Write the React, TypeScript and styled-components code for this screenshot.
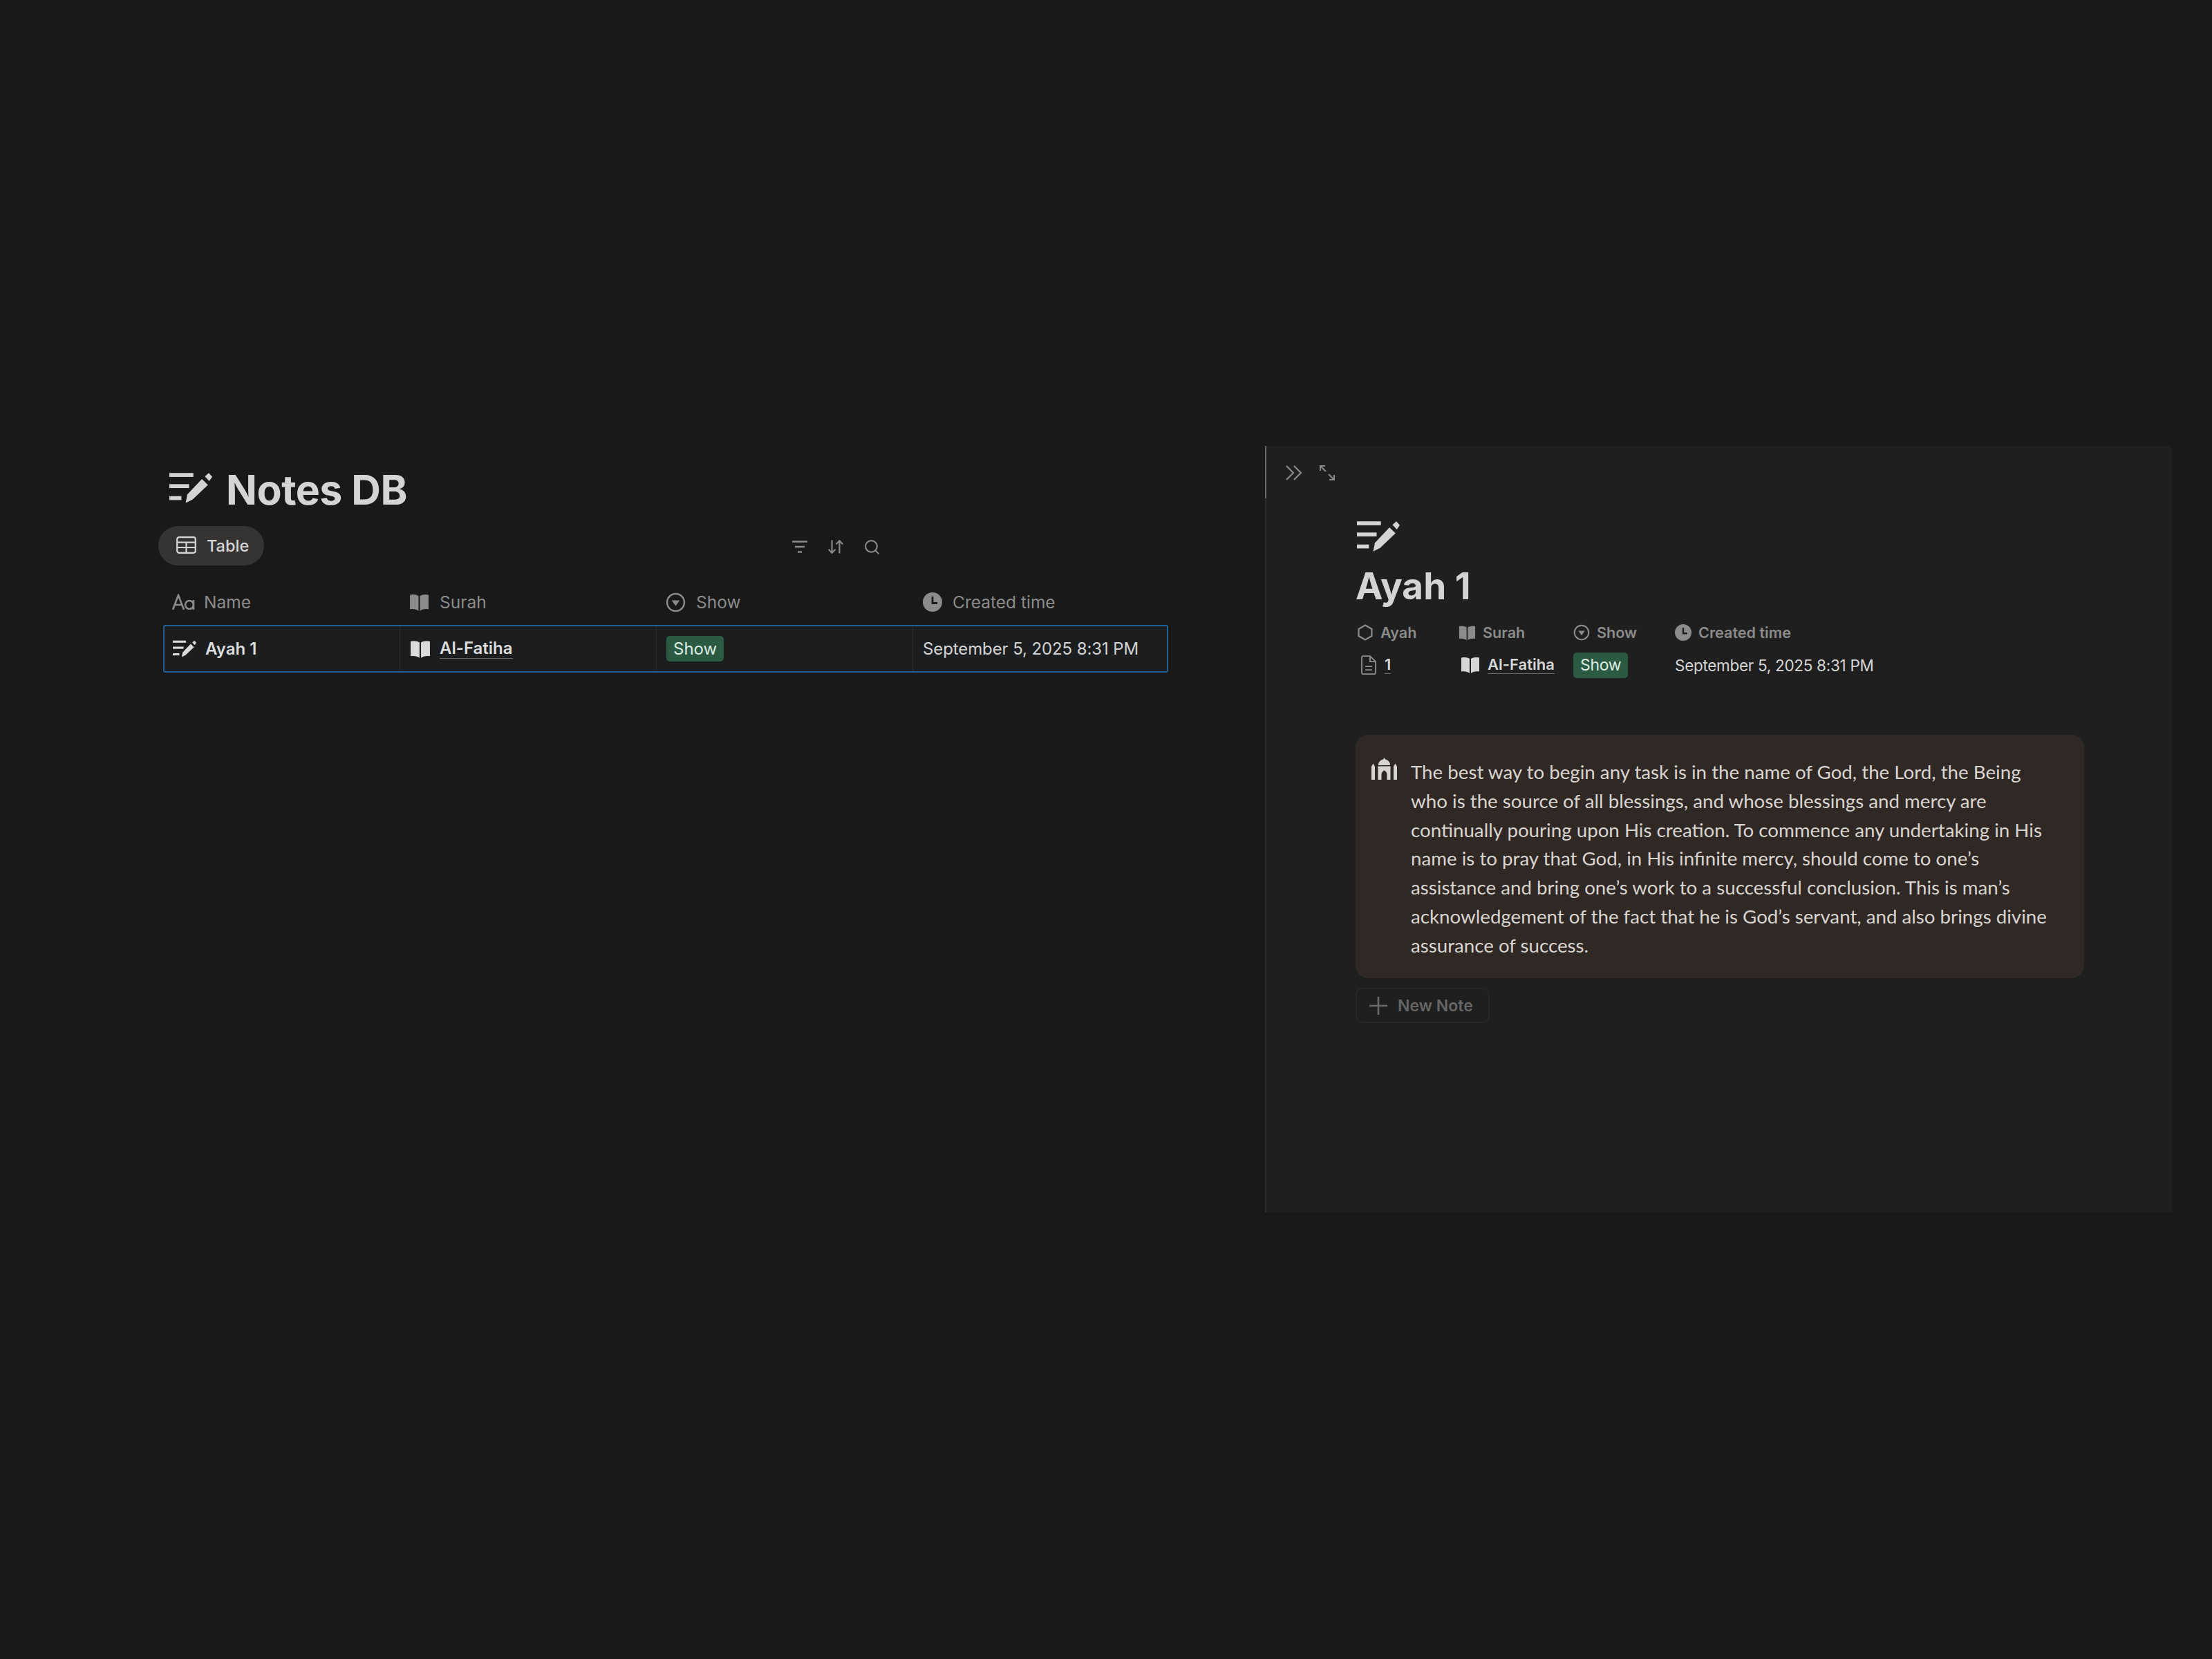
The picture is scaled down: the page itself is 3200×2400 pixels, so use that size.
import React from 'react';
import styled, { createGlobalStyle } from 'styled-components';
import { ArrowDownUp, Search } from 'lucide-react';

const GlobalStyle = createGlobalStyle`
  html, body {
    margin: 0;
    padding: 0;
    background: #191919;
  }
  body {
    font-family: 'Inter', 'Liberation Sans', sans-serif;
    -webkit-font-smoothing: antialiased;
  }
`;

const Page = styled.div`
  width: 3200px;
  height: 2400px;
  box-sizing: border-box;
  padding: 645px 58px 0 229px;
  display: flex;
  align-items: flex-start;
  justify-content: space-between;
  background: #191919;
`;

const Database = styled.section`
  width: 1461px;
  padding-top: 34px;
`;

const DbTitle = styled.h1`
  display: flex;
  align-items: center;
  gap: 20px;
  margin: 0 0 24px 16px;
  height: 58px;
  font-size: 59px;
  font-weight: 700;
  color: #d4d4d4;
  letter-spacing: -0.5px;
  svg {
    margin-top: -6px;
  }
`;

const Toolbar = styled.div`
  display: flex;
  align-items: center;
  height: 57px;
  margin-bottom: 22px;
`;

const ViewPill = styled.div`
  display: flex;
  align-items: center;
  gap: 15px;
  width: 153px;
  height: 57px;
  box-sizing: border-box;
  padding-left: 26px;
  border-radius: 29px;
  background: #353433;
  color: #d6d6d6;
  font-size: 23.5px;
  font-weight: 500;
  svg {
    margin-top: -3px;
  }
`;

const ToolIcons = styled.div`
  display: flex;
  align-items: center;
  gap: 27px;
  margin: 3px 0 0 763px;
  color: #8a8a8a;
`;

const Table = styled.div`
  margin-left: 7px;
  width: 1454px;
`;

const TableRow = styled.div<{ $selected?: boolean }>`
  display: grid;
  grid-template-columns: 340px 371px 371px 372px;
  height: ${p => (p.$selected ? '69px' : '62px')};
  box-sizing: border-box;
  ${p => p.$selected && `
    margin-top: 2px;
    border: 2px solid #1f5f96;
    border-radius: 3px;
    background: #1b1d1f;
  `}
`;

const HeadCell = styled.div<{ $gap?: number; $pad?: number }>`
  display: flex;
  align-items: center;
  gap: ${p => p.$gap ?? 15}px;
  padding-left: ${p => p.$pad ?? 16}px;
  color: #8b8b8b;
  font-size: 24.5px;
`;

const Cell = styled.div`
  display: flex;
  align-items: center;
  gap: 13px;
  padding-left: 12px;
  color: #dcdcdc;
  font-size: 24px;
  font-weight: 600;
  & + & {
    border-left: 1px solid #2a2b2d;
    padding-left: 14px;
  }
`;

const LinkText = styled.span`
  border-bottom: 1px solid #6a6a6a;
  line-height: 1.15;
`;

const Tag = styled.span<{ $size?: number }>`
  display: inline-flex;
  align-items: center;
  justify-content: center;
  height: 37px;
  padding: 0 10px;
  border-radius: 5px;
  background: #2b5a43;
  color: #dcece2;
  font-size: ${p => p.$size ?? 24}px;
  font-weight: 400;
`;

const DateText = styled.span`
  font-weight: 400;
  color: #d4d4d4;
  letter-spacing: -0.1px;
`;

const Peek = styled.aside`
  position: relative;
  width: 1312px;
  height: 1109px;
  box-sizing: border-box;
  padding: 24px 0 0 28px;
  background: #1f1f1f;
  border-left: 2px solid #2f2f2f;
`;

const PeekAccent = styled.div`
  position: absolute;
  left: -2px;
  top: 0;
  width: 2px;
  height: 76px;
  background: #6b6b6b;
`;

const PeekControls = styled.div`
  display: flex;
  align-items: center;
  gap: 24px;
  height: 30px;
  color: #8a8a8a;
`;

const PeekBody = styled.div`
  margin-left: 101px;
  width: 1056px;
`;

const PageIcon = styled.div`
  margin: 54px 0 0 2px;
  height: 44px;
  color: #d4d4d4;
`;

const PageTitle = styled.h2`
  margin: 15px 0 0;
  height: 72px;
  line-height: 72px;
  font-size: 53px;
  font-weight: 700;
  color: #d4d4d4;
`;

const PropGrid = styled.div`
  display: grid;
  grid-template-columns: 147px 166px 147px auto;
  justify-content: start;
  margin: 13px 0 0 2px;
`;

const PropHead = styled.div`
  display: flex;
  align-items: center;
  gap: 10px;
  height: 36px;
  color: #8b8b8b;
  font-size: 21.6px;
  font-weight: 600;
`;

const PropValue = styled.div<{ $pad?: number }>`
  display: flex;
  align-items: center;
  gap: 11px;
  height: 58px;
  padding-left: ${p => p.$pad ?? 3}px;
  color: #d6d6d6;
  font-size: 22px;
  font-weight: 600;
`;

const PropDate = styled(PropValue)`
  padding-left: 0;
  font-size: 22.5px;
  font-weight: 400;
  letter-spacing: -0.3px;
`;

const Callout = styled.div`
  display: flex;
  gap: 20px;
  margin-top: 72px;
  width: 1054px;
  height: 352px;
  box-sizing: border-box;
  padding: 33px 0 0 23px;
  border-radius: 18px;
  background: #302825;
`;

const CalloutIcon = styled.div`
  flex: none;
  width: 37px;
  height: 32px;
`;

const CalloutText = styled.p`
  margin: 0;
  font-family: 'Lato', 'Inter', sans-serif;
  font-size: 27.7px;
  line-height: 41.8px;
  color: #d8d4d0;
  white-space: nowrap;
`;

const NewButton = styled.div`
  display: inline-flex;
  align-items: center;
  gap: 15px;
  margin-top: 14px;
  width: 194px;
  height: 51px;
  box-sizing: border-box;
  padding-left: 18px;
  border: 2px solid #272727;
  border-radius: 10px;
  color: #666;
  font-size: 23px;
  font-weight: 600;
  white-space: nowrap;
`;

const NoteIcon = ({ size }: { size: number }) => (
  <svg width={size} height={size * 0.72} viewBox="0 0 50 36" fill="currentColor">
    <rect x="0" y="1" width="28" height="4.6" />
    <rect x="0" y="14" width="23" height="4.6" />
    <rect x="0" y="28" width="14" height="4.6" />
    <path d="M38 8 L45 15 L27 32 L19 36 L21 26 Z" />
    <path d="M41.5 5 L46 1 L50 5.5 L46.5 10.5 Z" />
  </svg>
);

const BookIcon = ({ size }: { size: number }) => (
  <svg width={size} height={size} viewBox="0 0 28 28" fill="currentColor">
    <path d="M1 3.5 C5 2.5 10 3 13 5 V26 C10 23.2 5 22.8 1 23.6 Z" />
    <path d="M27 3.5 C23 2.5 18 3 15 5 V26 C18 23.2 23 22.8 27 23.6 Z" />
  </svg>
);

const SelectIcon = ({ size }: { size: number }) => (
  <svg width={size} height={size} viewBox="0 0 28 28" fill="none" stroke="currentColor" strokeWidth="2.4">
    <circle cx="14" cy="14" r="12" />
    <path d="M8.5 11 H19.5 L14 19 Z" fill="currentColor" stroke="none" />
  </svg>
);

const ClockIcon = ({ size, bg }: { size: number; bg: string }) => (
  <svg width={size} height={size} viewBox="0 0 28 28">
    <circle cx="14" cy="14" r="14" fill="currentColor" />
    <path d="M14 6 V15.5 H21" fill="none" stroke={bg} strokeWidth="2.8" />
  </svg>
);

const HexIcon = ({ size }: { size: number }) => (
  <svg width={size} height={size} viewBox="0 0 24 24" fill="none" stroke="currentColor" strokeWidth="2.2">
    <path d="M12 1.5 L21.5 7 V17 L12 22.5 L2.5 17 V7 Z" />
  </svg>
);

const DocIcon = ({ size }: { size: number }) => (
  <svg width={size} height={size * 1.17} viewBox="0 0 24 28" fill="none" stroke="#8f8f8f" strokeWidth="1.8">
    <path d="M2 3 Q2 1 4 1 H14 L22 9 V25 Q22 27 20 27 H4 Q2 27 2 25 Z" />
    <path d="M14 1 V9 H22" />
    <path d="M7 16 H17 M7 21 H17" />
  </svg>
);

const TableIcon = () => (
  <svg width="29" height="25" viewBox="0 0 29 25" fill="none" stroke="currentColor" strokeWidth="2.2">
    <rect x="1.2" y="1.2" width="26.6" height="22.6" rx="3" />
    <path d="M1.2 8.6 H27.8 M1.2 16 H27.8 M14.5 8.6 V23.8" />
  </svg>
);

const FilterIcon = () => (
  <svg width="24" height="20" viewBox="0 0 24 20" fill="none" stroke="currentColor" strokeWidth="2.4">
    <path d="M1 2.5 H23 M5 10 H19 M9 17.5 H15" />
  </svg>
);

const DoubleChevronIcon = () => (
  <svg width="24" height="24" viewBox="0 0 24 24" fill="none" stroke="currentColor" strokeWidth="2.2">
    <path d="M1 2 L11 12 L1 22 M12 2 L22 12 L12 22" />
  </svg>
);

const ExpandIcon = () => (
  <svg width="24" height="24" viewBox="0 0 24 24" fill="none" stroke="currentColor" strokeWidth="2">
    <path d="M2 9 V2 H9 M2 2 L10 10 M22 15 V22 H15 M22 22 L14 14" />
  </svg>
);

const PlusIcon = () => (
  <svg width="26" height="26" viewBox="0 0 26 26" fill="none" stroke="#6a6a6a" strokeWidth="2.6">
    <path d="M13 0 V26 M0 13 H26" />
  </svg>
);

const MosqueIcon = () => (
  <svg width="37" height="32" viewBox="0 0 37 32" fill="#d8d4d0">
    <path fillRule="evenodd" d="M18.5 0 L20 2.4 C24.5 3.6 27 6.4 27 11 H10 C10 6.4 12.5 3.6 17 2.4 Z M9.5 12.5 H27.5 V32 H22.5 V24 C22.5 21.5 20.5 19.5 18.5 18.5 C16.5 19.5 14.5 21.5 14.5 24 V32 H9.5 Z" />
    <path d="M0 32 V13 L2.5 8.5 L5 13 V32 Z M32 32 V13 L34.5 8.5 L37 13 V32 Z" />
  </svg>
);

const calloutLines = [
  'The best way to begin any task is in the name of God, the Lord, the Being',
  'who is the source of all blessings, and whose blessings and mercy are',
  'continually pouring upon His creation. To commence any undertaking in His',
  'name is to pray that God, in His infinite mercy, should come to one’s',
  'assistance and bring one’s work to a successful conclusion. This is man’s',
  'acknowledgement of the fact that he is God’s servant, and also brings divine',
  'assurance of success.',
];

export default function App() {
  return (
    <>
      <GlobalStyle />
      <Page>
        <Database>
          <DbTitle>
            <NoteIcon size={62} />
            Notes DB
          </DbTitle>
          <Toolbar>
            <ViewPill>
              <TableIcon />
              Table
            </ViewPill>
            <ToolIcons>
              <FilterIcon />
              <ArrowDownUp size={26} strokeWidth={2} />
              <Search size={25} strokeWidth={2} />
            </ToolIcons>
          </Toolbar>
          <Table>
            <TableRow>
              <HeadCell $pad={13} $gap={13}>
                <svg width="33" height="24" viewBox="0 0 33 24" fill="none" stroke="currentColor" strokeWidth="2.6">
                  <path d="M1 23 L9 2 L17 23 M4 16 H14" />
                  <circle cx="25" cy="16" r="6" />
                  <path d="M31 9 V23" />
                </svg>
                Name
              </HeadCell>
              <HeadCell>
                <BookIcon size={29} />
                Surah
              </HeadCell>
              <HeadCell>
                <SelectIcon size={29} />
                Show
              </HeadCell>
              <HeadCell $pad={17} $gap={15}>
                <ClockIcon size={28} bg="#191919" />
                Created time
              </HeadCell>
            </TableRow>
            <TableRow $selected>
              <Cell>
                <NoteIcon size={34} />
                Ayah 1
              </Cell>
              <Cell>
                <BookIcon size={30} />
                <LinkText>Al-Fatiha</LinkText>
              </Cell>
              <Cell>
                <Tag>Show</Tag>
              </Cell>
              <Cell>
                <DateText>September 5, 2025 8:31 PM</DateText>
              </Cell>
            </TableRow>
          </Table>
        </Database>
        <Peek>
          <PeekAccent />
          <PeekControls>
            <DoubleChevronIcon />
            <ExpandIcon />
          </PeekControls>
          <PeekBody>
            <PageIcon>
              <NoteIcon size={62} />
            </PageIcon>
            <PageTitle>Ayah 1</PageTitle>
            <PropGrid>
              <PropHead>
                <HexIcon size={24} />
                Ayah
              </PropHead>
              <PropHead>
                <BookIcon size={25} />
                Surah
              </PropHead>
              <PropHead>
                <SelectIcon size={24} />
                Show
              </PropHead>
              <PropHead>
                <ClockIcon size={24} bg="#1f1f1f" />
                Created time
              </PropHead>
              <PropValue $pad={5}>
                <DocIcon size={24} />
                <LinkText>1</LinkText>
              </PropValue>
              <PropValue>
                <BookIcon size={28} />
                <LinkText>Al-Fatiha</LinkText>
              </PropValue>
              <PropDate>
                <Tag $size={23}>Show</Tag>
              </PropDate>
              <PropDate>September 5, 2025 8:31 PM</PropDate>
            </PropGrid>
            <Callout>
              <CalloutIcon>
                <MosqueIcon />
              </CalloutIcon>
              <CalloutText>
                {calloutLines.map(line => (
                  <React.Fragment key={line}>
                    {line}
                    <br />
                  </React.Fragment>
                ))}
              </CalloutText>
            </Callout>
            <NewButton>
              <PlusIcon />
              New Note
            </NewButton>
          </PeekBody>
        </Peek>
      </Page>
    </>
  );
}
